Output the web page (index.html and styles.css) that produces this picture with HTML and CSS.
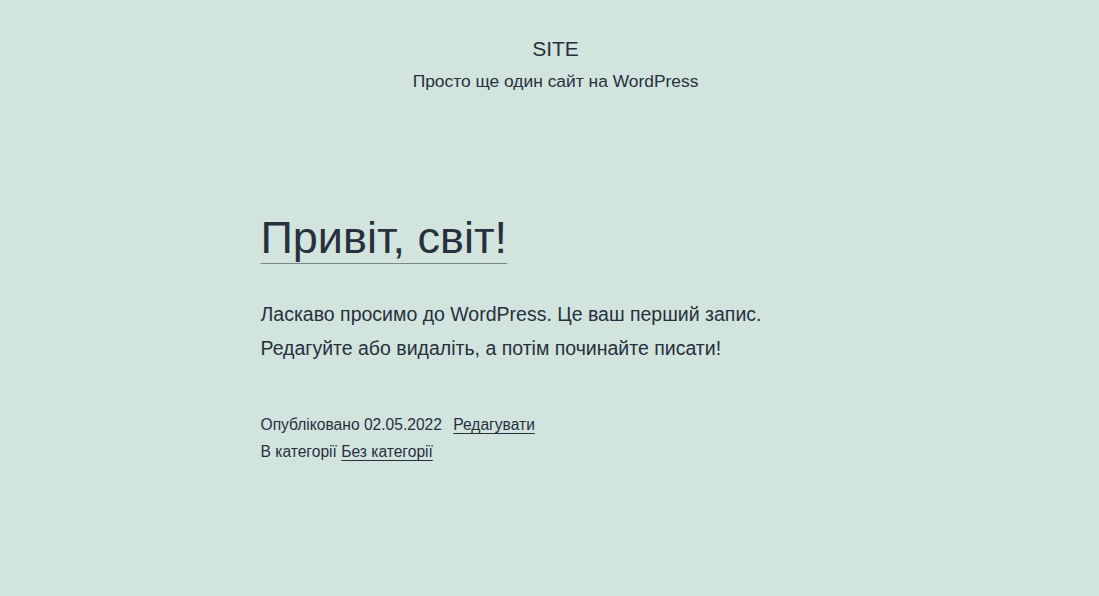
FILE: index.html
```html
<!DOCTYPE html>
<html lang="uk">
<head>
<meta charset="utf-8">
<title>SITE</title>
<link rel="stylesheet" href="styles.css">
</head>
<body>
<header class="site-header">
  <div class="site-title">SITE</div>
  <div class="site-desc">Просто ще один сайт на WordPress</div>
</header>
<main class="content">
  <article class="post">
    <h1 class="post-title"><a href="#">Привіт, світ!</a></h1>
    <div class="post-body">
      <p>Ласкаво просимо до WordPress. Це ваш перший запис. Редагуйте або видаліть, а потім починайте писати!</p>
    </div>
    <footer class="post-meta">
      <div class="meta-line">Опубліковано 02.05.2022 <a href="#" class="edit">Редагувати</a></div>
      <div class="meta-line">В категорії <a href="#">Без категорії</a></div>
    </footer>
  </article>
</main>
</body>
</html>
```
FILE: styles.css
```css
html, body {
  margin: 0;
  padding: 0;
}
body {
  background: #d1e4dd;
  color: #28303d;
  font-family: "Liberation Sans", Arial, sans-serif;
  min-height: 596px;
}
a {
  color: #28303d;
  text-decoration: underline;
  text-decoration-thickness: 1px;
  text-underline-offset: 3px;
}
.site-header {
  display: flex;
  flex-direction: column;
  align-items: center;
  padding-top: 36px;
  padding-left: 12px;
}
.site-title {
  font-size: 21px;
  line-height: 26px;
}
.site-desc {
  font-size: 17.4px;
  line-height: 26px;
  margin-top: 6px;
}
.content {
  width: 578px;
  margin: 0 auto;
  padding-top: 116px;
}
.post-title {
  margin: 0;
  font-weight: 400;
  font-size: 45px;
  line-height: 56px;
}
.post-title a {
  text-decoration-color: #7d858f;
  text-underline-offset: 10px;
}
.post-body p {
  margin: 31px 0 0;
  font-size: 19.5px;
  line-height: 34px;
  width: 520px;
}
.post-meta {
  margin-top: 46px;
  font-size: 15.6px;
  line-height: 27px;
}
.edit {
  margin-left: 7px;
}
```
